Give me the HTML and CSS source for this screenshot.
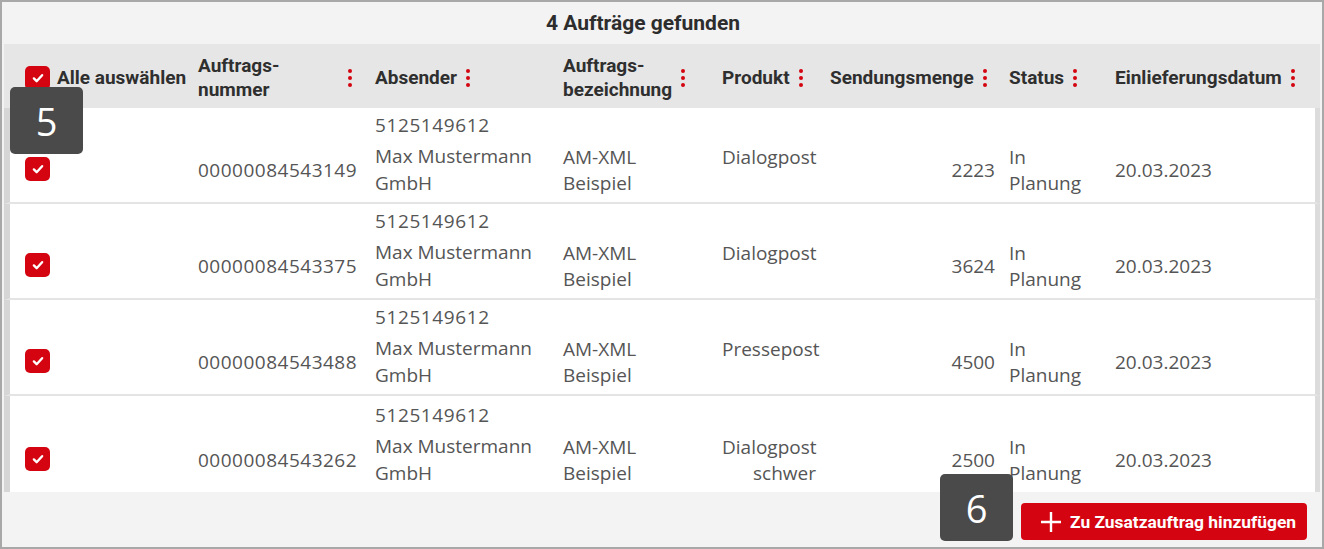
FILE: index.html
```html
<!DOCTYPE html>
<html lang="de">
<head>
<meta charset="utf-8">
<title>Aufträge</title>
<link rel="stylesheet" href="styles.css">
</head>
<body>
<div class="frame">
  <div class="title">4 Aufträge gefunden</div>
  <table class="grid">
    <colgroup>
      <col class="c1"><col class="c2"><col class="c3"><col class="c4"><col class="c5"><col class="c6"><col class="c7"><col class="c8">
    </colgroup>
    <thead>
      <tr>
        <th class="first"><div class="hcell"><span class="cb"><svg viewBox="0 0 24 24"><path d="M7.5 12.5l3 3 6-6.5" /></svg></span><span class="lbl">Alle auswählen</span></div></th>
        <th><div class="hcell"><span class="lbl grow">Auftrags-<br>nummer</span><span class="dots"><i></i><i></i><i></i></span></div></th>
        <th><div class="hcell"><span class="lbl">Absender</span><span class="dots"><i></i><i></i><i></i></span></div></th>
        <th><div class="hcell"><span class="lbl">Auftrags-<br>bezeichnung</span><span class="dots"><i></i><i></i><i></i></span></div></th>
        <th><div class="hcell"><span class="lbl">Produkt</span><span class="dots"><i></i><i></i><i></i></span></div></th>
        <th><div class="hcell"><span class="lbl">Sendungsmenge</span><span class="dots"><i></i><i></i><i></i></span></div></th>
        <th><div class="hcell"><span class="lbl">Status</span><span class="dots"><i></i><i></i><i></i></span></div></th>
        <th class="last"><div class="hcell"><span class="lbl">Einlieferungsdatum</span><span class="dots"><i></i><i></i><i></i></span></div></th>
      </tr>
    </thead>
    <tbody>
      <tr>
        <td class="first chk"><span class="cb"><svg viewBox="0 0 24 24"><path d="M7.5 12.5l3 3 6-6.5" /></svg></span></td>
        <td class="one clip">00000084543149</td>
        <td class="sender"><div class="no">5125149612</div><div>Max Mustermann<br>GmbH</div></td>
        <td>AM-XML<br>Beispiel</td>
        <td class="prod"><div class="pbox">Dialogpost</div></td>
        <td class="one num">2223</td>
        <td>In<br>Planung</td>
        <td class="one last">20.03.2023</td>
      </tr>
      <tr>
        <td class="first chk"><span class="cb"><svg viewBox="0 0 24 24"><path d="M7.5 12.5l3 3 6-6.5" /></svg></span></td>
        <td class="one clip">00000084543375</td>
        <td class="sender"><div class="no">5125149612</div><div>Max Mustermann<br>GmbH</div></td>
        <td>AM-XML<br>Beispiel</td>
        <td class="prod"><div class="pbox">Dialogpost</div></td>
        <td class="one num">3624</td>
        <td>In<br>Planung</td>
        <td class="one last">20.03.2023</td>
      </tr>
      <tr>
        <td class="first chk"><span class="cb"><svg viewBox="0 0 24 24"><path d="M7.5 12.5l3 3 6-6.5" /></svg></span></td>
        <td class="one clip">00000084543488</td>
        <td class="sender"><div class="no">5125149612</div><div>Max Mustermann<br>GmbH</div></td>
        <td>AM-XML<br>Beispiel</td>
        <td class="prod"><div class="pbox">Pressepost</div></td>
        <td class="one num">4500</td>
        <td>In<br>Planung</td>
        <td class="one last">20.03.2023</td>
      </tr>
      <tr class="lastrow">
        <td class="first chk"><span class="cb"><svg viewBox="0 0 24 24"><path d="M7.5 12.5l3 3 6-6.5" /></svg></span></td>
        <td class="one clip">00000084543262</td>
        <td class="sender"><div class="no">5125149612</div><div>Max Mustermann<br>GmbH</div></td>
        <td>AM-XML<br>Beispiel</td>
        <td class="prod"><div class="pbox">Dialogpost<br>schwer</div></td>
        <td class="one num">2500</td>
        <td>In<br>Planung</td>
        <td class="one last">20.03.2023</td>
      </tr>
    </tbody>
  </table>
  <div class="footer">
    <button class="add"><svg viewBox="0 0 22 22"><path d="M11 1v20M1 11h20" /></svg><span>Zu Zusatzauftrag hinzufügen</span></button>
  </div>
  <div class="badge b5">5</div>
  <div class="badge b6">6</div>
</div>
</body>
</html>
```

FILE: styles.css
```css
* { box-sizing: border-box; }
html, body { margin: 0; padding: 0; background: #fff; }
body { width: 1324px; height: 549px; overflow: hidden; font-family: "Open Sans", "Noto Sans", sans-serif; }

.frame {
  position: relative;
  width: 1324px;
  height: 549px;
  border: 2px solid #a8a8a8;
  background: #f3f3f3;
  padding: 0 2px 0 2px;
}

.title {
  height: 42px;
  display: flex;
  align-items: center;
  justify-content: center;
  padding-right: 38px;
  font-family: Roboto, "Liberation Sans", sans-serif;
  font-weight: 700;
  font-size: 21px;
  color: #2d2d2d;
}

.grid {
  width: 1316px;
  table-layout: fixed;
  border-collapse: separate;
  border-spacing: 0;
}
.c1 { width: 184px; }
.c2 { width: 177px; }
.c3 { width: 188px; }
.c4 { width: 159px; }
.c5 { width: 108px; }
.c6 { width: 179px; }
.c7 { width: 106px; }
.c8 { width: 215px; }

thead tr { background: #e6e6e6; height: 64px; }
th {
  padding: 3px 12px 0 10px;
  text-align: left;
  vertical-align: middle;
  font-family: Roboto, "Liberation Sans", sans-serif;
  font-weight: 700;
  font-size: 19px;
  line-height: 24px;
  color: #2f2f2f;
}
th.first { padding-left: 21px; }
.hcell { display: flex; align-items: center; gap: 8px; }
.lbl { white-space: nowrap; }
.lbl.grow { flex: 1; }
.dots { display: flex; flex-direction: column; gap: 3px; padding: 0 1px; }
.dots i { display: block; width: 4px; height: 4px; border-radius: 50%; background: #d40511; }
th.first .hcell { gap: 7px; }

.cb {
  display: inline-flex;
  width: 25px;
  height: 24px;
  border-radius: 5px;
  background: #d40511;
  align-items: center;
  justify-content: center;
  flex: none;
}
.cb svg { width: 22px; height: 22px; fill: none; stroke: #fff; stroke-width: 2.6; stroke-linecap: round; stroke-linejoin: round; }

tbody tr { height: 96px; background: #fff; }
td {
  padding: 0 4px 6px 10px;
  vertical-align: bottom;
  font-size: 19px;
  line-height: 26px;
  color: #555;
  border-bottom: 2px solid #e4e4e4;
}
tbody tr.lastrow td { border-bottom: 0; }
td.first { border-left: 6px solid #d6d6d6; padding-left: 15px; }
td.last { border-right: 5px solid #dcdcdc; }
td.one { padding-bottom: 19px; }
td.chk { padding-bottom: 21px; }
td.chk .cb { display: flex; }
td.clip { white-space: nowrap; overflow: hidden; text-overflow: clip; letter-spacing: 0.5px; }
td.num { text-align: right; }
td.sender { padding-bottom: 5px; line-height: 27px; }
.sender .no { margin-bottom: 4px; letter-spacing: 0.6px; }
td.prod { text-align: right; }
.pbox { height: 52px; }

.footer {
  height: 52px;
  display: flex;
  justify-content: flex-end;
  align-items: flex-start;
  padding: 11px 13px 0 0;
}
.add {
  display: flex;
  align-items: center;
  gap: 8px;
  height: 37px;
  width: 286px;
  padding: 0 0 0 19px;
  border: 0;
  border-radius: 4px;
  background: #d40511;
  color: #fff;
  font-family: Roboto, "Liberation Sans", sans-serif;
  font-weight: 700;
  font-size: 17.4px;
  white-space: nowrap;
}
.add svg { width: 22px; height: 22px; stroke: #fff; stroke-width: 2.4; fill: none; flex: none; }

.badge {
  position: absolute;
  width: 73px;
  height: 67px;
  border-radius: 5px;
  background: #4a4a4a;
  color: #fff;
  font-family: "Open Sans", "Noto Sans", sans-serif;
  font-size: 38px;
  display: flex;
  align-items: center;
  justify-content: center;
}
.b5 { left: 8px; top: 85px; }
.b6 { left: 938px; top: 472px; }
```
